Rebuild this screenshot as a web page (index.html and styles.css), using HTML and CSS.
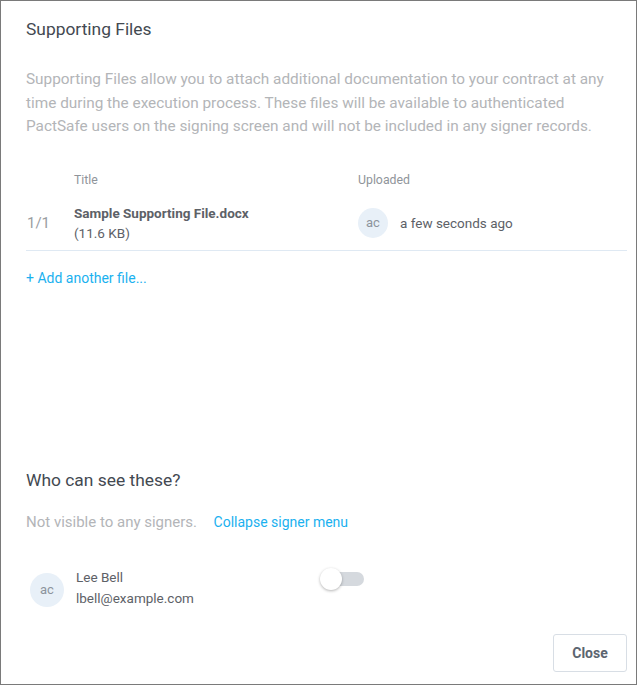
FILE: index.html
```html
<!DOCTYPE html>
<html>
<head>
<meta charset="utf-8">
<link rel="stylesheet" href="styles.css">
</head>
<body>
<div class="modal">
  <h1 class="title">Supporting Files</h1>
  <p class="desc">Supporting Files allow you to attach additional documentation to your contract at any time during the execution process. These files will be available to authenticated PactSafe users on the signing screen and will not be included in any signer records.</p>
  <div class="table">
    <div class="thead">
      <span class="c-idx"></span>
      <span class="c-title">Title</span>
      <span class="c-up">Uploaded</span>
    </div>
    <div class="row">
      <span class="c-idx idx">1/1</span>
      <div class="c-title file">
        <div class="fname">Sample Supporting File.docx</div>
        <div class="fsize">(11.6 KB)</div>
      </div>
      <div class="c-up uploaded">
        <span class="avatar sm">ac</span>
        <span class="when">a few seconds ago</span>
      </div>
    </div>
  </div>
  <a class="link add">+ Add another file...</a>
  <div class="spacer"></div>
  <h2 class="subtitle">Who can see these?</h2>
  <div class="vis">
    <span class="muted">Not visible to any signers.</span>
    <a class="link">Collapse signer menu</a>
  </div>
  <div class="signer">
    <span class="avatar lg">ac</span>
    <div class="sinfo">
      <div>Lee Bell</div>
      <div>lbell@example.com</div>
    </div>
    <span class="toggle"><span class="knob"></span></span>
  </div>
  <div class="footer">
    <button class="btn">Close</button>
  </div>
</div>
</body>
</html>
```
FILE: styles.css
```css
* { box-sizing: border-box; }
html, body { margin: 0; padding: 0; background: #fff; }
body { font-family: Roboto, "Noto Sans", sans-serif; }
.modal {
  width: 637px;
  height: 685px;
  border: 1px solid #7a7a7a;
  padding: 0 9px 0 25px;
  display: flex;
  flex-direction: column;
}
.title {
  margin: 16px 0 0;
  font-size: 17.4px;
  font-weight: 400;
  color: #434951;
  line-height: 24px;
}
.desc {
  margin: 27px 0 0;
  font-size: 15.35px;
  line-height: 23.5px;
  color: #b3b5b8;
  padding-right: 2px;
}
.table { margin-top: 32px; }
.thead, .row { display: flex; align-items: center; }
.thead {
  font-size: 12.3px;
  color: #8f949a;
  height: 18px;
  line-height: 18px;
}
.c-idx { width: 48px; flex: none; }
.c-title { width: 284px; flex: none; }
.c-up { flex: 1; }
.row {
  margin-top: 15px;
  height: 47px;
  border-bottom: 1px solid #dfe9f3;
  align-items: flex-start;
}
.idx {
  font-size: 15px;
  color: #9a9da1;
  padding-top: 10px;
  padding-left: 1px;
}
.fname {
  font-size: 13.5px;
  font-weight: 700;
  color: #5d6167;
  line-height: 18px;
}
.fsize {
  font-size: 13.5px;
  color: #5d6167;
  line-height: 22px;
}
.uploaded { display: flex; align-items: center; gap: 12px; padding-top: 4px; }
.avatar {
  display: inline-flex;
  align-items: center;
  justify-content: center;
  border-radius: 50%;
  background: #e8f0f8;
  color: #8d949c;
  flex: none;
}
.avatar.sm { width: 30px; height: 30px; font-size: 13px; }
.avatar.lg { width: 34px; height: 34px; font-size: 13px; margin-top: 6px; }
.when { font-size: 13.5px; color: #5d6167; }
.link {
  color: #1ab1ef;
  font-size: 14px;
  text-decoration: none;
  cursor: pointer;
}
.add { display: block; margin-top: 17px; line-height: 20px; }
.spacer { height: 180px; flex: none; }
.subtitle {
  margin: 0;
  font-size: 17.4px;
  font-weight: 400;
  color: #434951;
  line-height: 24px;
}
.vis { margin-top: 20px; font-size: 14px; line-height: 20px; }
.muted { color: #b3b5b8; margin-right: 13px; font-size: 15px; }
.signer {
  margin-top: 35px;
  display: flex;
  align-items: flex-start;
  padding-left: 4px;
}
.sinfo {
  margin-left: 12px;
  font-size: 13.5px;
  color: #5d6167;
  line-height: 21px;
  width: 244px;
}
.toggle {
  position: relative;
  width: 37px;
  height: 14px;
  border-radius: 7px;
  background: #d5d9de;
  margin-left: 7px;
  margin-top: 5px;
}
.knob {
  position: absolute;
  left: -7px;
  top: -4px;
  width: 22px;
  height: 22px;
  border-radius: 50%;
  background: #fff;
  box-shadow: 0 1px 3px rgba(0,0,0,0.3);
}
.footer {
  margin-top: auto;
  display: flex;
  justify-content: flex-end;
  padding-bottom: 12px;
}
.btn {
  width: 74px;
  height: 38px;
  border: 1px solid #d8dee5;
  border-radius: 3px;
  background: #fff;
  font-family: Roboto, sans-serif;
  font-size: 14px;
  font-weight: 700;
  color: #5c6570;
}
```
